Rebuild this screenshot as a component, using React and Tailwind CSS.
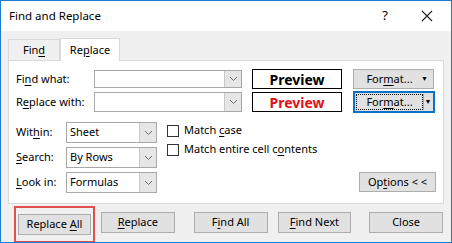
import React from "react";

const font = { fontFamily: '"Noto Sans", "Open Sans", sans-serif' };

function U({ children }) {
  return <span className="underline underline-offset-2 decoration-1">{children}</span>;
}

function Chevron() {
  return (
    <svg width="9" height="6" viewBox="0 0 9 6">
      <polyline points="1,1 4.5,4.5 8,1" fill="none" stroke="#6d6d6d" strokeWidth="1" />
    </svg>
  );
}

function Combo({ text, w, h }) {
  return (
    <div className={`flex ${w} ${h} border border-[#a8a8a8] bg-white`}>
      <div className="flex-1 flex items-center pl-[3px] text-[11px] text-black">{text}</div>
      <div className="w-[17px] flex items-center justify-center bg-[#e6e6e6] border-l border-[#c8c8c8]">
        <Chevron />
      </div>
    </div>
  );
}

function Btn({ children, className = "" }) {
  return (
    <div className={`flex items-center justify-center border border-[#adadad] bg-[#e1e1e1] text-[11px] text-black ${className}`}>
      <span className="whitespace-pre">{children}</span>
    </div>
  );
}

export default function App() {
  return (
    <div
      className="w-[452px] h-[243px] border border-[#1b7bd0] bg-[#f0f0f0] flex flex-col overflow-hidden text-black"
      style={font}
    >
      {/* title bar */}
      <div className="h-[30px] bg-white flex items-center shrink-0">
        <div className="pl-[8px] text-[11.5px] flex-1">Find and Replace</div>
        <div className="w-[28px] text-[13px] text-center mr-[22px]">?</div>
        <svg width="12" height="12" viewBox="0 0 12 12" className="mr-[18px]">
          <path d="M1 1 L11 11 M11 1 L1 11" stroke="#222" strokeWidth="1.1" />
        </svg>
      </div>

      {/* tabs */}
      <div className="flex items-end h-[29px] pl-[7px] shrink-0">
        <div className="w-[52px] h-[21px] border border-b-0 border-[#d9d9d9] bg-[#f0f0f0] flex items-center justify-center text-[11px]">
          <span>Fin<U>d</U></span>
        </div>
        <div className="w-[60px] h-[23px] border border-b-0 border-[#d9d9d9] bg-white flex items-center justify-center text-[11px] -mb-px relative z-10">
          <span>Re<U>p</U>lace</span>
        </div>
      </div>

      {/* panel */}
      <div className="mx-[7px] w-[436px] h-[144px] border border-[#d9d9d9] bg-white shrink-0 flex flex-col pt-[8px] px-[7px]">
        {/* row 1 */}
        <div className="flex items-center h-[20px]">
          <div className="w-[78px] text-[11px]">Fi<U>n</U>d what:</div>
          <Combo text="" w="w-[148px]" h="h-[18px]" />
          <div className="ml-[10px] w-[90px] h-[20px] border border-black flex items-center justify-center text-[14px] font-bold">
            Preview
          </div>
          <div className="ml-[11px] w-[81px] h-[20px] relative flex items-center justify-center border border-[#adadad] bg-[#e1e1e1] text-[11px]">
            <span className="pr-[8px]">For<U>m</U>at...</span>
            <span className="absolute right-[5px] top-[4px] text-[7px]">▼</span>
          </div>
        </div>
        {/* row 2 */}
        <div className="flex items-center h-[22px] mt-[2px]">
          <div className="w-[78px] text-[11px]">R<U>e</U>place with:</div>
          <Combo text="" w="w-[148px]" h="h-[20px]" />
          <div className="ml-[10px] w-[90px] h-[20px] border border-black flex items-center justify-center text-[14px] font-bold text-[#e0101a]">
            Preview
          </div>
          <div className="ml-[11px] w-[82px] h-[22px] border-2 border-[#0a72c8] bg-[#e1e1e1] flex p-[1px]">
            <div className="flex-1 border border-dotted border-black flex items-center justify-center text-[11px]">
              <span>For<U>m</U>at...</span>
            </div>
            <div className="w-[9px] border-l border-[#adadad] flex items-center justify-center text-[7px]">▼</div>
          </div>
        </div>

        {/* lower section */}
        <div className="flex mt-[9px]">
          <div className="flex flex-col gap-[4px]">
            <div className="flex items-center h-[21px]">
              <div className="w-[50px] text-[11px]">Wit<U>h</U>in:</div>
              <Combo text="Sheet" w="w-[91px]" h="h-[21px]" />
            </div>
            <div className="flex items-center h-[21px]">
              <div className="w-[50px] text-[11px]"><U>S</U>earch:</div>
              <Combo text="By Rows" w="w-[91px]" h="h-[21px]" />
            </div>
            <div className="flex items-center h-[21px]">
              <div className="w-[50px] text-[11px]"><U>L</U>ook in:</div>
              <Combo text="Formulas" w="w-[91px]" h="h-[21px]" />
            </div>
          </div>
          <div className="ml-[10px] flex flex-col gap-[6px] pt-[2px]">
            <div className="flex items-center h-[13px]">
              <div className="w-[12px] h-[12px] border border-[#333] bg-white" />
              <span className="ml-[5px] text-[11px]">Match <U>c</U>ase</span>
            </div>
            <div className="flex items-center h-[13px]">
              <div className="w-[12px] h-[12px] border border-[#333] bg-white" />
              <span className="ml-[5px] text-[11px]">Match entire cell c<U>o</U>ntents</span>
            </div>
          </div>
          <div className="flex-1 flex items-end justify-end pb-[1px]">
            <Btn className="w-[77px] h-[20px]">Op<U>t</U>ions &lt; &lt;</Btn>
          </div>
        </div>
      </div>

      {/* bottom buttons */}
      <div className="flex items-center h-[39px] pl-[13px] pr-[8px] shrink-0">
        <div className="border-2 border-[#e0504e] p-[2px] pt-[6px] h-[37px] mt-[1px]">
          <Btn className="w-[73px] h-[21px]">Replace <U>A</U>ll</Btn>
        </div>
        <Btn className="ml-[6px] w-[74px] h-[21px] mt-[-3px]"><U>R</U>eplace</Btn>
        <Btn className="ml-[19px] w-[74px] h-[21px] mt-[-3px]">F<U>i</U>nd All</Btn>
        <Btn className="ml-[10px] w-[74px] h-[21px] mt-[-3px]"><U>F</U>ind Next</Btn>
        <Btn className="ml-[18px] w-[74px] h-[21px] mt-[-3px]">Close</Btn>
      </div>
    </div>
  );
}
